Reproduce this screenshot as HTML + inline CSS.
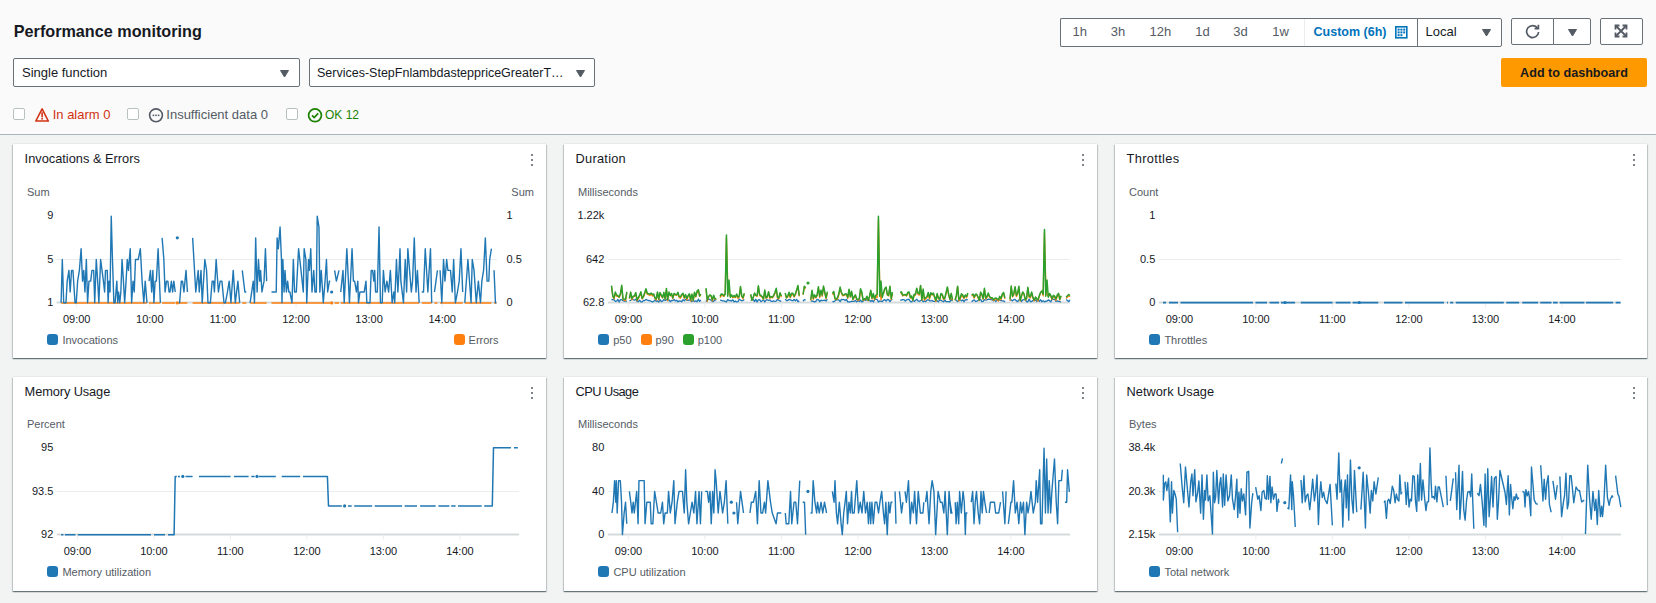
<!DOCTYPE html>
<html><head><meta charset="utf-8"><style>
html,body{margin:0;padding:0;}
body{width:1656px;height:603px;position:relative;overflow:hidden;background:#f2f3f3;font-family:"Liberation Sans", sans-serif;}
.t{position:absolute;line-height:1;white-space:nowrap;}
</style></head><body>
<div style="position:absolute;left:0;top:0;width:1656px;height:134px;background:#fafafa"></div>
<div style="position:absolute;left:0;top:134px;width:1656px;height:1px;background:#aab7b8"></div>
<div class="t" style="left:13.80px;top:22.99px;font-size:16.2px;color:#16191f;font-weight:bold;">Performance monitoring</div>
<div style="position:absolute;left:13px;top:58px;width:285px;height:27px;background:#fff;border:1px solid #687078;border-radius:2px"></div>
<div class="t" style="left:22.00px;top:66.30px;font-size:13px;color:#16191f;font-weight:normal;">Single function</div>
<svg style="position:absolute;left:280px;top:70px" width="9" height="7" viewBox="0 0 9 7"><path d="M0.5 0.5 L8.5 0.5 L4.5 7 Z" fill="#545b64" stroke="#545b64" stroke-width="1" stroke-linejoin="round"/></svg>
<div style="position:absolute;left:309px;top:58px;width:284px;height:27px;background:#fff;border:1px solid #687078;border-radius:2px"></div>
<div class="t" style="left:317.00px;top:66.72px;font-size:12.5px;color:#16191f;font-weight:normal;">Services-StepFnlambdasteppriceGreaterT…</div>
<svg style="position:absolute;left:576px;top:70px" width="9" height="7" viewBox="0 0 9 7"><path d="M0.5 0.5 L8.5 0.5 L4.5 7 Z" fill="#545b64" stroke="#545b64" stroke-width="1" stroke-linejoin="round"/></svg>
<div style="position:absolute;left:13px;top:108px;width:10px;height:10px;background:#fff;border:1px solid #b9c2c3;border-radius:2px"></div>
<div style="position:absolute;left:127px;top:108px;width:10px;height:10px;background:#fff;border:1px solid #b9c2c3;border-radius:2px"></div>
<div style="position:absolute;left:286px;top:108px;width:10px;height:10px;background:#fff;border:1px solid #b9c2c3;border-radius:2px"></div>
<svg style="position:absolute;left:34px;top:107px" width="16" height="16" viewBox="0 0 16 16"><path d="M8.1 1.9 L14.3 14 L1.8 14 Z" fill="none" stroke="#d13212" stroke-width="1.6" stroke-linejoin="round"/><rect x="7.3" y="5.3" width="1.6" height="5" fill="#d13212"/><rect x="7.3" y="11" width="1.6" height="1.6" fill="#d13212"/></svg>
<div class="t" style="left:52.70px;top:107.70px;font-size:13px;color:#d13212;font-weight:normal;">In alarm 0</div>
<svg style="position:absolute;left:148px;top:107px" width="16" height="16" viewBox="0 0 16 16"><circle cx="8" cy="8.3" r="6.4" fill="none" stroke="#545b64" stroke-width="1.6"/><rect x="4.6" y="7.6" width="1.6" height="1.5" fill="#545b64"/><rect x="7.2" y="7.6" width="1.6" height="1.5" fill="#545b64"/><rect x="9.8" y="7.6" width="1.6" height="1.5" fill="#545b64"/></svg>
<div class="t" style="left:166.30px;top:107.70px;font-size:13px;color:#545b64;font-weight:normal;">Insufficient data 0</div>
<svg style="position:absolute;left:307px;top:107px" width="16" height="16" viewBox="0 0 16 16"><circle cx="8" cy="8.3" r="6.4" fill="none" stroke="#1d8102" stroke-width="1.7"/><path d="M5 8.4 L7.2 10.6 L11.2 6.4" fill="none" stroke="#1d8102" stroke-width="1.7"/></svg>
<div class="t" style="left:325.00px;top:108.64px;font-size:12px;color:#1d8102;font-weight:normal;">OK 12</div>
<div style="position:absolute;left:1060px;top:18px;width:357px;height:27px;background:#fff;border:1px solid #687078;border-right:none;border-radius:2px 0 0 2px"></div>
<div class="t" style="left:929.80px;width:300px;text-align:center;top:24.80px;font-size:13px;color:#545b64;font-weight:normal;">1h</div>
<div class="t" style="left:967.90px;width:300px;text-align:center;top:24.80px;font-size:13px;color:#545b64;font-weight:normal;">3h</div>
<div class="t" style="left:1010.40px;width:300px;text-align:center;top:24.80px;font-size:13px;color:#545b64;font-weight:normal;">12h</div>
<div class="t" style="left:1052.40px;width:300px;text-align:center;top:24.80px;font-size:13px;color:#545b64;font-weight:normal;">1d</div>
<div class="t" style="left:1090.50px;width:300px;text-align:center;top:24.80px;font-size:13px;color:#545b64;font-weight:normal;">3d</div>
<div class="t" style="left:1130.50px;width:300px;text-align:center;top:24.80px;font-size:13px;color:#545b64;font-weight:normal;">1w</div>
<div style="position:absolute;left:1304px;top:19px;width:1px;height:27px;background:#eaeded"></div>
<div class="t" style="left:1313.60px;top:26.02px;font-size:12.5px;color:#0073bb;font-weight:bold;">Custom (6h)</div>
<svg style="position:absolute;left:1395px;top:26px" width="13" height="13" viewBox="0 0 13 13"><rect x="0.8" y="0.8" width="11" height="11" fill="none" stroke="#0073bb" stroke-width="1.6"/><g fill="#0073bb"><rect x="2.6" y="2.6" width="2" height="2"/><rect x="5.4" y="2.6" width="2" height="2"/><rect x="8.2" y="2.6" width="2" height="2"/><rect x="2.6" y="5.4" width="2" height="2"/><rect x="5.4" y="5.4" width="2" height="2"/><rect x="8.2" y="5.4" width="2" height="2"/><rect x="2.6" y="8.2" width="2" height="2"/><rect x="5.4" y="8.2" width="2" height="2"/></g></svg>
<div style="position:absolute;left:1417px;top:18px;width:83px;height:27px;background:#fff;border:1px solid #687078;border-radius:0 2px 2px 0"></div>
<div class="t" style="left:1425.60px;top:25.00px;font-size:13px;color:#16191f;font-weight:normal;">Local</div>
<svg style="position:absolute;left:1482px;top:29px" width="9" height="7" viewBox="0 0 9 7"><path d="M0.5 0.5 L8.5 0.5 L4.5 7 Z" fill="#545b64" stroke="#545b64" stroke-width="1" stroke-linejoin="round"/></svg>
<div style="position:absolute;left:1511px;top:18px;width:41px;height:25px;background:#fff;border:1px solid #687078;border-radius:2px 0 0 2px"></div>
<div style="position:absolute;left:1553px;top:18px;width:36px;height:25px;background:#fff;border:1px solid #687078;border-radius:0 2px 2px 0"></div>
<svg style="position:absolute;left:1524.5px;top:24px" width="16" height="15" viewBox="0 0 16 15"><path d="M12.6 4.2 A6 6 0 1 0 13.6 8" fill="none" stroke="#545b64" stroke-width="1.7"/><path d="M9.6 4.6 L13.4 4.6 L13.4 0.8" fill="none" stroke="#545b64" stroke-width="1.7"/></svg>
<svg style="position:absolute;left:1568px;top:29px" width="9" height="7" viewBox="0 0 9 7"><path d="M0.5 0.5 L8.5 0.5 L4.5 7 Z" fill="#545b64" stroke="#545b64" stroke-width="1" stroke-linejoin="round"/></svg>
<div style="position:absolute;left:1600px;top:18px;width:41px;height:25px;background:#fff;border:1px solid #687078;border-radius:2px"></div>
<svg style="position:absolute;left:1614px;top:24px" width="14" height="14" viewBox="0 0 14 14"><g fill="none" stroke="#545b64" stroke-width="1.8"><path d="M1.5 5.5 V1.5 H5.5"/><path d="M8.5 1.5 H12.5 V5.5"/><path d="M12.5 8.5 V12.5 H8.5"/><path d="M5.5 12.5 H1.5 V8.5"/><path d="M2 2 L12 12 M12 2 L2 12"/></g></svg>
<div style="position:absolute;left:1501px;top:58px;width:146px;height:29px;background:#ff9900;border-radius:2px"></div>
<div class="t" style="left:1520.10px;top:66.83px;font-size:12.6px;color:#16191f;font-weight:bold;">Add to dashboard</div>
<div style="position:absolute;left:13px;top:144px;width:533px;height:214px;background:#fff;box-shadow:0 1px 1px 0 rgba(0,28,36,.42),1px 1px 1px 0 rgba(0,28,36,.15),-1px 1px 1px 0 rgba(0,28,36,.15),0 -1px 0 0 rgba(0,28,36,.04);"></div>
<div style="position:absolute;left:564px;top:144px;width:533px;height:214px;background:#fff;box-shadow:0 1px 1px 0 rgba(0,28,36,.42),1px 1px 1px 0 rgba(0,28,36,.15),-1px 1px 1px 0 rgba(0,28,36,.15),0 -1px 0 0 rgba(0,28,36,.04);"></div>
<div style="position:absolute;left:1115px;top:144px;width:532px;height:214px;background:#fff;box-shadow:0 1px 1px 0 rgba(0,28,36,.42),1px 1px 1px 0 rgba(0,28,36,.15),-1px 1px 1px 0 rgba(0,28,36,.15),0 -1px 0 0 rgba(0,28,36,.04);"></div>
<div style="position:absolute;left:13px;top:377px;width:533px;height:214px;background:#fff;box-shadow:0 1px 1px 0 rgba(0,28,36,.42),1px 1px 1px 0 rgba(0,28,36,.15),-1px 1px 1px 0 rgba(0,28,36,.15),0 -1px 0 0 rgba(0,28,36,.04);"></div>
<div style="position:absolute;left:564px;top:377px;width:533px;height:214px;background:#fff;box-shadow:0 1px 1px 0 rgba(0,28,36,.42),1px 1px 1px 0 rgba(0,28,36,.15),-1px 1px 1px 0 rgba(0,28,36,.15),0 -1px 0 0 rgba(0,28,36,.04);"></div>
<div style="position:absolute;left:1115px;top:377px;width:532px;height:214px;background:#fff;box-shadow:0 1px 1px 0 rgba(0,28,36,.42),1px 1px 1px 0 rgba(0,28,36,.15),-1px 1px 1px 0 rgba(0,28,36,.15),0 -1px 0 0 rgba(0,28,36,.04);"></div>
<div class="t" style="left:24.60px;top:152.66px;font-size:12.8px;color:#16191f;font-weight:normal;letter-spacing:0px;">Invocations &amp; Errors</div>
<div style="position:absolute;left:530.7px;top:153.8px;width:2.6px;height:2.6px;border-radius:50%;background:#545b64"></div>
<div style="position:absolute;left:530.7px;top:158.8px;width:2.6px;height:2.6px;border-radius:50%;background:#545b64"></div>
<div style="position:absolute;left:530.7px;top:163.8px;width:2.6px;height:2.6px;border-radius:50%;background:#545b64"></div>
<div class="t" style="left:27.00px;top:186.99px;font-size:11px;color:#545b64;font-weight:normal;">Sum</div>
<div class="t" style="left:511.30px;top:186.99px;font-size:11px;color:#545b64;font-weight:normal;">Sum</div>
<div class="t" style="left:-246.70px;width:300px;text-align:right;top:209.79px;font-size:11px;color:#16191f;font-weight:normal;">9</div>
<div class="t" style="left:-246.70px;width:300px;text-align:right;top:254.09px;font-size:11px;color:#16191f;font-weight:normal;">5</div>
<div class="t" style="left:-246.70px;width:300px;text-align:right;top:297.09px;font-size:11px;color:#16191f;font-weight:normal;">1</div>
<div class="t" style="left:506.50px;top:209.79px;font-size:11px;color:#16191f;font-weight:normal;">1</div>
<div class="t" style="left:506.50px;top:254.09px;font-size:11px;color:#16191f;font-weight:normal;">0.5</div>
<div class="t" style="left:506.50px;top:297.09px;font-size:11px;color:#16191f;font-weight:normal;">0</div>
<svg style="position:absolute;left:0;top:0" width="1656" height="603"><line x1="56.5" y1="259.5" x2="497" y2="259.5" stroke="#eaeded" stroke-width="1"/><line x1="56.5" y1="302.5" x2="497" y2="302.5" stroke="#d5dbdb" stroke-width="2"/><line x1="76.7" y1="302.5" x2="76.7" y2="307.5" stroke="#eaeded" stroke-width="1"/><line x1="149.8" y1="302.5" x2="149.8" y2="307.5" stroke="#eaeded" stroke-width="1"/><line x1="222.9" y1="302.5" x2="222.9" y2="307.5" stroke="#eaeded" stroke-width="1"/><line x1="296.0" y1="302.5" x2="296.0" y2="307.5" stroke="#eaeded" stroke-width="1"/><line x1="369.1" y1="302.5" x2="369.1" y2="307.5" stroke="#eaeded" stroke-width="1"/><line x1="442.2" y1="302.5" x2="442.2" y2="307.5" stroke="#eaeded" stroke-width="1"/><path d="M61.10 302.90 L146.95 302.90 M149.04 302.90 L160.36 302.90 M162.11 302.90 L175.22 302.90 M178.71 302.90 L187.42 302.90 M192.64 302.90 L239.66 302.90 M242.27 302.90 L246.28 302.90 M250.11 302.90 L266.66 302.90 M271.53 302.90 L330.28 302.90 M334.63 302.90 L338.99 302.90 M340.73 302.90 L419.16 302.90 M421.77 302.90 L431.70 302.90 M434.48 302.90 L437.44 302.90 M440.06 302.90 L462.70 302.90 M464.79 302.90 L491.43 302.90 M494.04 302.90 L496.30 302.90" fill="none" stroke="#ff7f0e" stroke-width="1.5" stroke-linejoin="round"/><circle cx="177.31" cy="302.90" r="1.6" fill="#ff7f0e"/><circle cx="331.67" cy="302.90" r="1.6" fill="#ff7f0e"/><path d="M61.10 302.80 L62.31 259.50 L63.71 302.80 L64.93 302.80 L65.97 302.80 L67.19 281.15 L68.93 270.33 L70.15 291.98 L71.54 270.33 L72.94 270.33 L75.03 302.80 L76.25 302.80 L77.64 281.15 L79.38 270.33 L81.12 248.68 L82.52 281.15 L83.74 270.33 L84.95 291.98 L86.35 259.50 L87.57 302.80 L88.96 281.15 L90.70 281.15 L91.92 270.33 L93.66 270.33 L94.71 302.80 L96.27 259.50 L97.67 281.15 L98.89 302.80 L100.63 259.50 L102.02 270.33 L103.42 281.15 L104.63 291.98 L105.51 270.33 L107.25 270.33 L108.12 302.80 L108.99 281.15 L110.03 291.98 L111.25 216.20 L112.47 259.50 L113.86 302.80 L115.08 302.80 L116.83 281.15 L117.70 302.80 L118.57 291.98 L119.79 302.80 L120.83 291.98 L122.05 259.50 L123.44 281.15 L124.66 302.80 L126.06 281.15 L127.27 259.50 L128.49 270.33 L130.24 248.68 L131.63 302.80 L133.02 281.15 L134.24 291.98 L135.46 259.50 L136.85 259.50 L138.25 259.50 L140.34 248.68 L142.08 281.15 L143.82 302.80 L145.21 281.15 L146.95 302.80 M149.04 281.15 L150.44 270.33 L151.66 291.98 L152.88 270.33 L153.92 302.80 L155.14 281.15 L156.36 281.15 L158.10 248.68 L160.36 302.80 M162.11 237.85 L163.85 259.50 L165.07 291.98 L166.46 281.15 L167.85 281.15 L169.07 291.98 L170.00 291.98 L171.39 281.15 L172.61 291.98 L173.83 281.15 L175.22 291.98 M178.71 302.80 L179.58 302.80 L181.32 281.15 L182.54 281.15 L183.93 291.98 L186.02 270.33 L187.42 291.98 M192.64 237.85 L195.77 291.98 L196.99 281.15 L198.21 270.33 L199.26 291.98 L201.00 270.33 L202.22 302.80 L204.83 259.50 L206.57 270.33 L207.97 302.80 L210.40 302.80 L212.15 281.15 L213.54 281.15 L214.41 291.98 L216.15 259.50 L218.42 291.98 L220.16 281.15 L221.90 281.15 L223.99 302.80 L225.38 302.80 L227.47 291.98 L229.21 281.15 L230.95 302.80 L233.22 270.33 L235.31 302.80 L237.92 281.15 L239.66 302.80 M242.27 270.33 L244.89 291.98 L246.28 291.98 M250.11 302.80 L253.25 281.15 L254.47 302.80 L255.68 237.85 L257.08 291.98 L258.47 259.50 L259.69 281.15 L260.56 270.33 L261.95 291.98 L264.04 281.15 L265.44 248.68 L266.66 281.15 M271.53 291.98 L274.49 291.98 L276.23 291.98 L277.11 237.85 L278.32 248.68 L280.07 227.03 L281.46 259.50 L281.98 302.80 L282.85 259.50 L284.07 291.98 L285.00 270.33 L286.39 291.98 L287.61 281.15 L288.83 291.98 L289.88 291.98 L291.97 302.80 L293.36 259.50 L294.58 291.98 L296.32 291.98 L298.58 248.68 L301.02 270.33 L303.29 291.98 L304.16 248.68 L305.90 259.50 L306.77 302.80 L308.51 259.50 L309.38 270.33 L310.77 248.68 L311.99 291.98 L313.74 270.33 L314.95 291.98 L316.35 291.98 L317.22 216.20 L318.96 227.03 L319.83 291.98 L321.22 270.33 L323.31 302.80 L325.06 281.15 L326.45 259.50 L327.67 291.98 L329.41 281.15 L330.28 281.15 M334.63 270.33 L336.38 281.15 L338.99 270.33 M340.73 291.98 L342.99 270.33 L344.21 302.80 L346.83 248.68 L349.44 302.80 L352.05 248.68 L353.44 281.15 L354.66 281.15 L356.40 291.98 L357.80 281.15 L358.49 302.80 L359.89 291.98 L362.50 291.98 L364.24 291.98 L365.98 281.15 L366.85 302.80 L369.99 302.80 L371.21 270.33 L372.60 270.33 L373.82 281.15 L374.69 270.33 L375.56 291.98 L377.30 291.98 L379.04 227.03 L380.44 302.80 L382.18 302.80 L383.40 270.33 L385.14 291.98 L386.88 281.15 L388.62 291.98 L390.36 270.33 L392.11 302.80 L393.85 291.98 L394.72 302.80 L396.46 259.50 L397.85 291.98 L399.07 270.33 L400.00 248.68 L400.87 281.15 L403.48 302.80 L405.22 259.50 L406.62 291.98 L407.84 248.68 L409.58 270.33 L411.32 291.98 L412.54 281.15 L414.28 237.85 L416.02 291.98 L417.42 270.33 L419.16 302.80 M421.77 291.98 L423.51 291.98 L425.25 248.68 L427.86 291.98 L430.48 248.68 L431.70 302.80 M434.48 291.98 L437.44 270.33 M440.06 270.33 L441.80 302.80 L443.54 259.50 L444.93 281.15 L446.67 259.50 L447.89 270.33 L450.51 270.33 L452.25 291.98 L453.64 259.50 L455.38 302.80 L457.47 291.98 L459.21 281.15 L460.95 248.68 L462.70 291.98 M464.79 302.80 L467.92 259.50 L471.06 302.80 L472.27 259.50 L474.02 270.33 L476.28 302.80 L478.37 281.15 L480.46 302.80 L481.85 281.15 L483.59 270.33 L485.34 237.85 L487.08 281.15 L488.82 281.15 L489.69 259.50 L491.43 248.68 M494.04 270.33 L495.44 302.80 L496.31 302.80" fill="none" stroke="#1f77b4" stroke-width="1.4" stroke-linejoin="round"/><circle cx="177.31" cy="237.85" r="1.6" fill="#1f77b4"/><circle cx="331.67" cy="291.98" r="1.6" fill="#1f77b4"/></svg>
<div class="t" style="left:-73.30px;width:300px;text-align:center;top:313.99px;font-size:11px;color:#16191f;font-weight:normal;">09:00</div>
<div class="t" style="left:-0.20px;width:300px;text-align:center;top:313.99px;font-size:11px;color:#16191f;font-weight:normal;">10:00</div>
<div class="t" style="left:72.90px;width:300px;text-align:center;top:313.99px;font-size:11px;color:#16191f;font-weight:normal;">11:00</div>
<div class="t" style="left:146.00px;width:300px;text-align:center;top:313.99px;font-size:11px;color:#16191f;font-weight:normal;">12:00</div>
<div class="t" style="left:219.10px;width:300px;text-align:center;top:313.99px;font-size:11px;color:#16191f;font-weight:normal;">13:00</div>
<div class="t" style="left:292.20px;width:300px;text-align:center;top:313.99px;font-size:11px;color:#16191f;font-weight:normal;">14:00</div>
<div style="position:absolute;left:47.4px;top:334.3px;width:11px;height:11px;border-radius:3px;background:#1f77b4"></div>
<div class="t" style="left:62.40px;top:335.49px;font-size:11px;color:#545b64;font-weight:normal;">Invocations</div>
<div style="position:absolute;left:453.6px;top:334.3px;width:11px;height:11px;border-radius:3px;background:#ff7f0e"></div>
<div class="t" style="left:468.60px;top:335.49px;font-size:11px;color:#545b64;font-weight:normal;">Errors</div>
<div class="t" style="left:575.60px;top:152.66px;font-size:12.8px;color:#16191f;font-weight:normal;letter-spacing:0.25px;">Duration</div>
<div style="position:absolute;left:1081.7px;top:153.8px;width:2.6px;height:2.6px;border-radius:50%;background:#545b64"></div>
<div style="position:absolute;left:1081.7px;top:158.8px;width:2.6px;height:2.6px;border-radius:50%;background:#545b64"></div>
<div style="position:absolute;left:1081.7px;top:163.8px;width:2.6px;height:2.6px;border-radius:50%;background:#545b64"></div>
<div class="t" style="left:578.00px;top:186.99px;font-size:11px;color:#545b64;font-weight:normal;">Milliseconds</div>
<div class="t" style="left:304.30px;width:300px;text-align:right;top:209.79px;font-size:11px;color:#16191f;font-weight:normal;">1.22k</div>
<div class="t" style="left:304.30px;width:300px;text-align:right;top:254.09px;font-size:11px;color:#16191f;font-weight:normal;">642</div>
<div class="t" style="left:304.30px;width:300px;text-align:right;top:297.09px;font-size:11px;color:#16191f;font-weight:normal;">62.8</div>
<svg style="position:absolute;left:0;top:0" width="1656" height="603"><line x1="607.8" y1="259.5" x2="1070" y2="259.5" stroke="#eaeded" stroke-width="1"/><line x1="607.8" y1="302.5" x2="1070" y2="302.5" stroke="#d5dbdb" stroke-width="2"/><line x1="628.4" y1="302.5" x2="628.4" y2="307.5" stroke="#eaeded" stroke-width="1"/><line x1="704.9" y1="302.5" x2="704.9" y2="307.5" stroke="#eaeded" stroke-width="1"/><line x1="781.4" y1="302.5" x2="781.4" y2="307.5" stroke="#eaeded" stroke-width="1"/><line x1="857.9" y1="302.5" x2="857.9" y2="307.5" stroke="#eaeded" stroke-width="1"/><line x1="934.4" y1="302.5" x2="934.4" y2="307.5" stroke="#eaeded" stroke-width="1"/><line x1="1010.9" y1="302.5" x2="1010.9" y2="307.5" stroke="#eaeded" stroke-width="1"/><path d="M611.50 300.19 L612.78 299.40 L614.05 299.75 L615.33 301.35 L616.61 301.13 L617.89 299.47 L619.16 301.98 L620.44 299.62 L621.72 299.69 L622.99 300.64 L624.27 301.12 L625.55 301.19 L626.83 301.26 M629.38 300.54 L630.66 300.39 L631.93 299.11 L633.21 299.70 L634.49 300.20 L635.77 299.13 L637.04 301.38 L638.32 301.54 L639.60 300.22 L640.87 301.87 L642.15 301.90 L643.43 300.51 L644.71 300.65 L645.98 299.34 L647.26 300.18 L648.54 300.51 L649.81 300.56 L651.09 301.28 L652.37 301.97 L653.65 301.44 L654.92 299.99 L656.20 301.42 L657.48 300.93 L658.75 301.99 L660.03 299.59 L661.31 301.55 L662.59 301.22 L663.86 299.45 L665.14 300.52 L666.42 299.54 L667.69 300.14 L668.97 299.85 L670.25 301.73 L671.53 300.43 L672.80 300.53 L674.08 299.47 L675.36 300.95 L676.64 300.27 L677.91 301.83 L679.19 300.88 L680.47 301.06 L681.74 301.56 L683.02 299.63 L684.30 300.90 L685.58 299.16 L686.85 300.29 L688.13 300.25 L689.41 300.15 L690.68 300.04 L691.96 301.56 L693.24 300.72 L694.52 301.31 L695.79 300.83 L697.07 301.72 L698.35 299.19 L699.62 301.38 L700.90 300.05 M706.01 301.62 L707.29 299.55 L708.56 299.26 L709.84 299.38 L711.12 300.35 L712.40 301.58 L713.67 301.44 L714.95 299.31 L716.23 300.40 M720.06 300.14 L721.34 300.35 L722.61 300.91 L723.89 300.81 L725.17 301.31 L726.44 301.89 L727.72 299.46 L729.00 300.64 L730.28 300.41 L731.55 301.07 L732.83 299.82 L734.11 301.93 L735.38 300.92 L736.66 301.91 L737.94 301.64 L739.22 299.20 L740.49 300.09 L741.77 300.76 L743.05 300.48 L744.32 299.47 M750.71 300.49 L751.99 299.78 L753.26 299.36 L754.54 301.56 L755.82 299.29 L757.10 301.98 L758.37 299.82 L759.65 299.65 L760.93 301.60 L762.20 300.79 L763.48 299.64 L764.76 301.96 L766.04 300.18 L767.31 299.70 L768.59 300.51 L769.87 299.90 L771.14 301.34 L772.42 301.42 L773.70 300.95 L774.98 301.48 L776.25 301.00 L777.53 299.25 L778.81 300.34 L780.08 301.01 L781.36 301.21 M785.19 299.16 L786.47 300.50 L787.75 300.49 L789.03 299.40 L790.30 299.85 L791.58 300.32 L792.86 300.76 L794.13 299.45 L795.41 300.81 L796.69 299.32 L797.97 301.80 L799.24 300.75 M803.07 301.27 L804.35 299.66 L805.63 300.04 M810.74 301.04 L812.01 300.85 L813.29 301.41 L814.57 301.85 L815.85 301.38 L817.12 299.35 L818.40 299.56 L819.68 301.67 L820.95 300.25 L822.23 300.61 L823.51 300.28 L824.79 300.09 L826.06 301.11 L827.34 299.21 M832.45 301.47 L833.73 301.82 L835.00 300.81 L836.28 299.78 L837.56 299.64 L838.83 299.88 L840.11 301.67 L841.39 299.35 L842.67 299.67 L843.94 299.45 L845.22 300.48 L846.50 299.34 L847.77 301.86 L849.05 301.91 L850.33 301.94 L851.61 301.27 L852.88 301.28 L854.16 301.46 L855.44 300.36 L856.71 301.89 L857.99 300.29 L859.27 301.52 L860.55 300.03 L861.82 301.94 L863.10 301.10 L864.38 299.28 L865.65 300.44 L866.93 299.65 L868.21 300.09 L869.49 300.23 L870.76 301.45 L872.04 300.33 L873.32 301.88 L874.59 299.68 L875.87 299.22 L877.15 299.52 L878.43 301.85 L879.70 301.02 L880.98 301.08 L882.26 301.67 L883.53 300.18 L884.81 299.69 L886.09 301.09 L887.37 299.50 L888.64 299.69 L889.92 301.63 L891.20 299.78 L892.47 299.44 M900.14 300.08 L901.42 300.17 L902.69 299.61 L903.97 299.67 L905.25 301.05 L906.52 299.91 L907.80 299.48 L909.08 299.41 L910.36 301.53 L911.63 301.92 L912.91 300.11 L914.19 301.38 L915.46 300.37 L916.74 299.26 L918.02 300.90 L919.30 301.27 L920.57 300.68 L921.85 300.09 L923.13 301.71 L924.40 300.90 L925.68 301.61 L926.96 300.08 L928.24 299.59 L929.51 300.91 L930.79 300.92 L932.07 300.44 L933.34 301.38 L934.62 301.28 L935.90 301.04 L937.18 300.67 L938.45 301.76 L939.73 299.82 L941.01 300.32 L942.28 301.13 L943.56 301.78 L944.84 299.79 L946.12 301.62 L947.39 301.61 L948.67 301.62 L949.95 301.76 L951.22 299.37 L952.50 301.22 M955.06 299.58 L956.33 300.20 L957.61 301.46 L958.89 300.74 L960.16 299.44 L961.44 300.91 L962.72 299.94 L964.00 301.72 L965.27 299.89 L966.55 299.75 L967.83 299.61 M971.66 301.81 L972.94 300.50 L974.21 299.80 L975.49 301.45 L976.77 301.23 L978.04 300.45 L979.32 299.83 L980.60 299.40 L981.88 301.64 L983.15 301.47 L984.43 299.68 L985.71 300.13 L986.98 299.91 L988.26 299.11 L989.54 299.28 L990.82 299.56 L992.09 299.75 L993.37 300.85 L994.65 300.14 L995.92 301.47 L997.20 299.80 L998.48 299.80 L999.76 299.91 L1001.03 300.71 L1002.31 300.90 L1003.59 300.78 L1004.86 301.90 M1009.97 300.41 L1011.25 299.91 L1012.53 300.89 L1013.81 299.59 L1015.08 299.33 L1016.36 300.88 L1017.64 301.60 L1018.91 299.79 L1020.19 299.12 L1021.47 301.57 L1022.75 299.93 L1024.02 299.61 L1025.30 299.33 L1026.58 301.64 L1027.85 301.73 L1029.13 299.14 L1030.41 301.66 L1031.69 301.49 L1032.96 300.33 L1034.24 300.71 L1035.52 299.82 L1036.79 301.45 L1038.07 299.35 L1039.35 301.37 L1040.63 299.77 L1041.90 301.80 L1043.18 300.63 L1044.46 301.91 L1045.73 301.09 L1047.01 301.09 L1048.29 299.91 L1049.57 300.68 L1050.84 301.84 L1052.12 299.11 L1053.40 299.42 L1054.67 299.34 L1055.95 301.28 L1057.23 300.86 L1058.51 301.34 L1059.78 301.64 L1061.06 301.90 M1066.17 299.50 L1067.45 300.60 L1068.72 301.47 L1070.00 300.06" fill="none" stroke="#1f77b4" stroke-width="1.3" stroke-linejoin="round"/><path d="M611.50 286.28 L612.78 296.51 L614.05 298.90 L615.33 293.14 L616.61 296.38 L617.89 296.06 L619.16 297.47 L620.44 294.31 L621.72 286.62 L622.99 299.74 L624.27 300.06 L625.55 300.55 L626.83 293.06 M629.38 298.74 L630.66 292.91 L631.93 299.89 L633.21 297.01 L634.49 296.44 L635.77 293.35 L637.04 300.72 L638.32 298.62 L639.60 296.20 L640.87 293.22 L642.15 299.00 L643.43 297.14 L644.71 293.85 L645.98 290.18 L647.26 294.40 L648.54 294.70 L649.81 295.56 L651.09 293.96 L652.37 295.96 L653.65 294.69 L654.92 298.19 L656.20 300.17 L657.48 292.61 L658.75 300.21 L660.03 293.52 L661.31 296.14 L662.59 297.90 L663.86 293.58 L665.14 299.36 L666.42 289.92 L667.69 300.87 L668.97 292.76 L670.25 295.86 L671.53 294.83 L672.80 298.78 L674.08 293.93 L675.36 295.22 L676.64 295.42 L677.91 293.01 L679.19 297.68 L680.47 298.17 L681.74 295.68 L683.02 293.70 L684.30 298.32 L685.58 295.50 L686.85 300.01 L688.13 296.01 L689.41 294.67 L690.68 301.14 L691.96 294.89 L693.24 300.78 L694.52 293.12 L695.79 297.00 L697.07 292.41 L698.35 290.13 L699.62 296.40 L700.90 294.49 M706.01 289.46 L707.29 301.39 L708.56 297.06 L709.84 295.24 L711.12 296.38 L712.40 301.12 L713.67 296.47 L714.95 298.78 L716.23 299.78 M720.06 297.60 L721.34 295.26 L722.61 295.60 L723.89 296.33 L725.17 293.86 L726.44 238.00 L727.72 282.00 L729.00 294.10 L730.28 296.03 L731.55 295.82 L732.83 297.77 L734.11 296.99 L735.38 297.57 L736.66 295.47 L737.94 298.46 L739.22 297.07 L740.49 287.24 L741.77 296.47 L743.05 298.83 L744.32 293.80 M750.71 295.42 L751.99 300.36 L753.26 297.40 L754.54 293.89 L755.82 295.73 L757.10 296.46 L758.37 286.93 L759.65 295.63 L760.93 296.38 L762.20 297.08 L763.48 299.32 L764.76 291.37 L766.04 298.26 L767.31 297.58 L768.59 292.17 L769.87 298.73 L771.14 297.00 L772.42 297.93 L773.70 296.31 L774.98 293.41 L776.25 289.74 L777.53 298.28 L778.81 298.75 L780.08 293.17 L781.36 297.25 M785.19 294.16 L786.47 298.15 L787.75 296.95 L789.03 293.19 L790.30 297.77 L791.58 294.75 L792.86 294.39 L794.13 297.04 L795.41 294.93 L796.69 290.55 L797.97 286.37 L799.24 296.40 M803.07 294.89 L804.35 286.69 L805.63 288.56 M810.74 300.48 L812.01 291.29 L813.29 299.59 L814.57 295.56 L815.85 298.06 L817.12 295.72 L818.40 287.93 L819.68 297.70 L820.95 290.74 L822.23 296.39 L823.51 287.14 L824.79 293.38 L826.06 298.90 L827.34 293.07 M832.45 294.65 L833.73 292.58 L835.00 299.18 L836.28 299.51 L837.56 298.82 L838.83 295.04 L840.11 288.15 L841.39 293.14 L842.67 295.81 L843.94 295.42 L845.22 294.87 L846.50 294.91 L847.77 298.42 L849.05 289.99 L850.33 297.15 L851.61 292.44 L852.88 299.95 L854.16 297.74 L855.44 295.60 L856.71 299.55 L857.99 300.08 L859.27 299.87 L860.55 290.11 L861.82 293.49 L863.10 300.45 L864.38 299.96 L865.65 299.51 L866.93 297.40 L868.21 300.93 L869.49 297.09 L870.76 291.11 L872.04 298.94 L873.32 294.70 L874.59 299.80 L875.87 296.17 L877.15 297.61 L878.43 219.30 L879.70 283.00 L880.98 299.96 L882.26 293.30 L883.53 293.68 L884.81 288.78 L886.09 287.99 L887.37 295.23 L888.64 295.96 L889.92 286.69 L891.20 299.57 L892.47 293.57 M900.14 292.97 L901.42 292.62 L902.69 295.99 L903.97 295.08 L905.25 295.22 L906.52 296.08 L907.80 293.36 L909.08 293.37 L910.36 298.18 L911.63 297.19 L912.91 300.61 L914.19 295.14 L915.46 295.22 L916.74 288.80 L918.02 294.35 L919.30 295.07 L920.57 285.88 L921.85 300.29 L923.13 290.36 L924.40 300.22 L925.68 298.75 L926.96 297.84 L928.24 293.89 L929.51 299.12 L930.79 293.74 L932.07 295.08 L933.34 293.79 L934.62 297.92 L935.90 301.68 L937.18 294.27 L938.45 298.99 L939.73 299.42 L941.01 294.64 L942.28 295.30 L943.56 299.75 L944.84 298.61 L946.12 293.41 L947.39 288.02 L948.67 295.19 L949.95 299.73 L951.22 294.16 L952.50 300.49 M955.06 300.41 L956.33 296.48 L957.61 286.77 L958.89 300.84 L960.16 299.25 L961.44 295.23 L962.72 296.44 L964.00 298.72 L965.27 295.48 L966.55 297.72 L967.83 294.14 M971.66 296.19 L972.94 294.66 L974.21 298.19 L975.49 295.06 L976.77 295.07 L978.04 297.70 L979.32 300.56 L980.60 293.01 L981.88 294.98 L983.15 299.37 L984.43 289.55 L985.71 299.05 L986.98 297.43 L988.26 294.47 L989.54 297.05 L990.82 298.76 L992.09 298.11 L993.37 300.42 L994.65 299.87 L995.92 298.40 L997.20 300.04 L998.48 301.10 L999.76 297.25 L1001.03 299.73 L1002.31 294.85 L1003.59 293.18 L1004.86 298.89 M1009.97 300.72 L1011.25 286.78 L1012.53 296.84 L1013.81 294.89 L1015.08 287.26 L1016.36 296.70 L1017.64 294.27 L1018.91 287.29 L1020.19 301.06 L1021.47 296.40 L1022.75 292.33 L1024.02 294.26 L1025.30 300.40 L1026.58 298.84 L1027.85 288.70 L1029.13 297.25 L1030.41 297.94 L1031.69 293.23 L1032.96 298.06 L1034.24 300.91 L1035.52 297.46 L1036.79 299.34 L1038.07 301.04 L1039.35 296.18 L1040.63 292.72 L1041.90 291.34 L1043.18 295.88 L1044.46 232.60 L1045.73 282.00 L1047.01 295.06 L1048.29 295.90 L1049.57 294.71 L1050.84 296.51 L1052.12 299.56 L1053.40 296.20 L1054.67 297.24 L1055.95 300.38 L1057.23 296.29 L1058.51 293.74 L1059.78 300.05 L1061.06 296.25 M1066.17 298.59 L1067.45 296.89 L1068.72 295.79 L1070.00 296.69" fill="none" stroke="#ff7f0e" stroke-width="1.3" stroke-linejoin="round"/><path d="M611.50 285.66 L612.78 295.82 L614.05 297.89 L615.33 292.09 L616.61 294.96 L617.89 295.74 L619.16 296.94 L620.44 293.58 L621.72 285.34 L622.99 298.78 L624.27 299.14 L625.55 299.34 L626.83 291.97 M629.38 298.34 L630.66 292.06 L631.93 298.53 L633.21 295.99 L634.49 296.07 L635.77 292.52 L637.04 299.96 L638.32 297.62 L639.60 295.20 L640.87 291.78 L642.15 298.29 L643.43 296.35 L644.71 292.81 L645.98 288.82 L647.26 293.25 L648.54 293.83 L649.81 294.28 L651.09 293.08 L652.37 294.51 L653.65 294.05 L654.92 297.74 L656.20 298.88 L657.48 291.95 L658.75 298.89 L660.03 292.48 L661.31 295.23 L662.59 297.50 L663.86 292.34 L665.14 298.98 L666.42 288.46 L667.69 299.52 L668.97 292.09 L670.25 295.41 L671.53 293.47 L672.80 297.90 L674.08 293.48 L675.36 294.33 L676.64 294.83 L677.91 292.22 L679.19 296.62 L680.47 296.77 L681.74 294.42 L683.02 293.20 L684.30 297.45 L685.58 294.61 L686.85 298.52 L688.13 295.61 L689.41 293.76 L690.68 299.74 L691.96 294.11 L693.24 300.17 L694.52 292.15 L695.79 296.32 L697.07 291.00 L698.35 289.72 L699.62 295.85 L700.90 294.09 M706.01 288.08 L707.29 299.96 L708.56 296.45 L709.84 294.94 L711.12 295.62 L712.40 299.67 L713.67 295.26 L714.95 298.41 L716.23 298.64 M720.06 296.44 L721.34 293.92 L722.61 294.29 L723.89 295.60 L725.17 294.30 L726.44 235.00 L727.72 296.30 L729.00 280.00 L730.28 297.30 L731.55 294.84 L732.83 296.85 L734.11 295.55 L735.38 296.93 L736.66 293.97 L737.94 297.07 L739.22 296.33 L740.49 286.54 L741.77 296.02 L743.05 297.43 L744.32 293.27 M750.71 294.24 L751.99 300.01 L753.26 296.99 L754.54 292.99 L755.82 295.37 L757.10 295.56 L758.37 285.74 L759.65 294.54 L760.93 295.34 L762.20 296.72 L763.48 298.74 L764.76 290.00 L766.04 297.81 L767.31 296.64 L768.59 291.81 L769.87 297.30 L771.14 296.50 L772.42 297.14 L773.70 295.36 L774.98 292.24 L776.25 288.31 L777.53 297.09 L778.81 298.03 L780.08 292.78 L781.36 296.10 M785.19 292.93 L786.47 297.64 L787.75 296.10 L789.03 292.26 L790.30 296.73 L791.58 293.26 L792.86 293.27 L794.13 296.27 L795.41 293.77 L796.69 289.69 L797.97 285.58 L799.24 295.66 M803.07 294.29 L804.35 286.21 L805.63 287.73 M810.74 299.77 L812.01 290.24 L813.29 298.21 L814.57 294.83 L815.85 297.10 L817.12 294.88 L818.40 286.85 L819.68 296.25 L820.95 290.28 L822.23 294.94 L823.51 286.04 L824.79 292.12 L826.06 297.84 L827.34 291.72 M832.45 293.74 L833.73 291.47 L835.00 298.64 L836.28 299.14 L837.56 297.57 L838.83 293.77 L840.11 287.05 L841.39 292.45 L842.67 294.72 L843.94 295.02 L845.22 293.77 L846.50 293.92 L847.77 297.38 L849.05 289.16 L850.33 296.58 L851.61 291.27 L852.88 299.10 L854.16 296.55 L855.44 294.86 L856.71 299.15 L857.99 299.13 L859.27 298.82 L860.55 288.71 L861.82 292.13 L863.10 300.08 L864.38 298.74 L865.65 298.90 L866.93 296.27 L868.21 300.17 L869.49 296.41 L870.76 290.22 L872.04 298.01 L873.32 293.56 L874.59 298.74 L875.87 295.05 L877.15 294.30 L878.43 216.30 L879.70 296.30 L880.98 281.00 L882.26 297.30 L883.53 292.71 L884.81 288.45 L886.09 287.09 L887.37 294.66 L888.64 295.20 L889.92 286.30 L891.20 298.48 L892.47 292.20 M900.14 292.52 L901.42 291.89 L902.69 295.10 L903.97 294.64 L905.25 294.53 L906.52 295.45 L907.80 292.20 L909.08 291.89 L910.36 297.45 L911.63 295.94 L912.91 300.14 L914.19 294.14 L915.46 294.40 L916.74 288.15 L918.02 293.06 L919.30 293.88 L920.57 285.41 L921.85 299.64 L923.13 289.08 L924.40 298.73 L925.68 297.72 L926.96 296.50 L928.24 292.41 L929.51 297.93 L930.79 292.66 L932.07 294.52 L933.34 293.05 L934.62 296.87 L935.90 300.27 L937.18 293.61 L938.45 298.21 L939.73 299.09 L941.01 293.50 L942.28 294.47 L943.56 298.49 L944.84 298.03 L946.12 292.32 L947.39 286.91 L948.67 294.33 L949.95 299.20 L951.22 293.37 L952.50 299.30 M955.06 300.00 L956.33 295.62 L957.61 286.19 L958.89 299.58 L960.16 297.97 L961.44 293.80 L962.72 295.13 L964.00 297.64 L965.27 294.95 L966.55 296.43 L967.83 292.97 M971.66 294.90 L972.94 294.01 L974.21 297.08 L975.49 294.14 L976.77 294.36 L978.04 297.01 L979.32 300.08 L980.60 292.12 L981.88 294.23 L983.15 298.56 L984.43 288.23 L985.71 297.93 L986.98 296.31 L988.26 292.99 L989.54 296.49 L990.82 297.85 L992.09 297.70 L993.37 299.65 L994.65 298.43 L995.92 298.00 L997.20 298.83 L998.48 299.76 L999.76 296.34 L1001.03 298.48 L1002.31 294.02 L1003.59 292.46 L1004.86 297.98 M1009.97 299.24 L1011.25 286.08 L1012.53 296.27 L1013.81 293.46 L1015.08 286.79 L1016.36 295.24 L1017.64 292.94 L1018.91 286.22 L1020.19 300.25 L1021.47 295.87 L1022.75 291.90 L1024.02 293.84 L1025.30 299.68 L1026.58 298.05 L1027.85 287.29 L1029.13 296.31 L1030.41 296.45 L1031.69 292.07 L1032.96 297.58 L1034.24 299.95 L1035.52 296.97 L1036.79 299.00 L1038.07 299.60 L1039.35 295.47 L1040.63 292.19 L1041.90 290.92 L1043.18 294.30 L1044.46 229.60 L1045.73 296.30 L1047.01 280.00 L1048.29 297.30 L1049.57 293.48 L1050.84 295.62 L1052.12 298.62 L1053.40 295.35 L1054.67 296.13 L1055.95 298.89 L1057.23 295.04 L1058.51 293.36 L1059.78 299.15 L1061.06 295.67 M1066.17 297.14 L1067.45 295.70 L1068.72 294.46 L1070.00 295.55" fill="none" stroke="#2ca02c" stroke-width="1.5" stroke-linejoin="round"/><circle cx="808.00" cy="283.00" r="1.6" fill="#2ca02c"/></svg>
<div class="t" style="left:478.40px;width:300px;text-align:center;top:313.99px;font-size:11px;color:#16191f;font-weight:normal;">09:00</div>
<div class="t" style="left:554.90px;width:300px;text-align:center;top:313.99px;font-size:11px;color:#16191f;font-weight:normal;">10:00</div>
<div class="t" style="left:631.40px;width:300px;text-align:center;top:313.99px;font-size:11px;color:#16191f;font-weight:normal;">11:00</div>
<div class="t" style="left:707.90px;width:300px;text-align:center;top:313.99px;font-size:11px;color:#16191f;font-weight:normal;">12:00</div>
<div class="t" style="left:784.40px;width:300px;text-align:center;top:313.99px;font-size:11px;color:#16191f;font-weight:normal;">13:00</div>
<div class="t" style="left:860.90px;width:300px;text-align:center;top:313.99px;font-size:11px;color:#16191f;font-weight:normal;">14:00</div>
<div style="position:absolute;left:598.2px;top:334.3px;width:11px;height:11px;border-radius:3px;background:#1f77b4"></div>
<div class="t" style="left:613.20px;top:335.49px;font-size:11px;color:#545b64;font-weight:normal;">p50</div>
<div style="position:absolute;left:640.5px;top:334.3px;width:11px;height:11px;border-radius:3px;background:#ff7f0e"></div>
<div class="t" style="left:655.50px;top:335.49px;font-size:11px;color:#545b64;font-weight:normal;">p90</div>
<div style="position:absolute;left:682.7px;top:334.3px;width:11px;height:11px;border-radius:3px;background:#2ca02c"></div>
<div class="t" style="left:697.70px;top:335.49px;font-size:11px;color:#545b64;font-weight:normal;">p100</div>
<div class="t" style="left:1126.60px;top:152.66px;font-size:12.8px;color:#16191f;font-weight:normal;letter-spacing:0.35px;">Throttles</div>
<div style="position:absolute;left:1632.7px;top:153.8px;width:2.6px;height:2.6px;border-radius:50%;background:#545b64"></div>
<div style="position:absolute;left:1632.7px;top:158.8px;width:2.6px;height:2.6px;border-radius:50%;background:#545b64"></div>
<div style="position:absolute;left:1632.7px;top:163.8px;width:2.6px;height:2.6px;border-radius:50%;background:#545b64"></div>
<div class="t" style="left:1129.00px;top:186.99px;font-size:11px;color:#545b64;font-weight:normal;">Count</div>
<div class="t" style="left:855.30px;width:300px;text-align:right;top:209.79px;font-size:11px;color:#16191f;font-weight:normal;">1</div>
<div class="t" style="left:855.30px;width:300px;text-align:right;top:254.09px;font-size:11px;color:#16191f;font-weight:normal;">0.5</div>
<div class="t" style="left:855.30px;width:300px;text-align:right;top:297.09px;font-size:11px;color:#16191f;font-weight:normal;">0</div>
<svg style="position:absolute;left:0;top:0" width="1656" height="603"><line x1="1158.8" y1="259.5" x2="1621" y2="259.5" stroke="#eaeded" stroke-width="1"/><line x1="1158.8" y1="302.5" x2="1621" y2="302.5" stroke="#d5dbdb" stroke-width="2"/><line x1="1179.4" y1="302.5" x2="1179.4" y2="307.5" stroke="#eaeded" stroke-width="1"/><line x1="1255.9" y1="302.5" x2="1255.9" y2="307.5" stroke="#eaeded" stroke-width="1"/><line x1="1332.4" y1="302.5" x2="1332.4" y2="307.5" stroke="#eaeded" stroke-width="1"/><line x1="1408.9" y1="302.5" x2="1408.9" y2="307.5" stroke="#eaeded" stroke-width="1"/><line x1="1485.4" y1="302.5" x2="1485.4" y2="307.5" stroke="#eaeded" stroke-width="1"/><line x1="1561.9" y1="302.5" x2="1561.9" y2="307.5" stroke="#eaeded" stroke-width="1"/><path d="M1163.00 302.70 L1166.00 302.70 M1169.00 302.70 L1178.00 302.70 M1180.50 302.70 L1253.00 302.70 M1255.50 302.70 L1267.00 302.70 M1269.60 302.70 L1279.00 302.70 M1281.00 302.70 L1295.10 302.70 M1300.80 302.70 L1332.60 302.70 M1335.70 302.70 L1350.60 302.70 M1352.60 302.70 L1378.30 302.70 M1384.00 302.70 L1402.40 302.70 M1405.00 302.70 L1444.00 302.70 M1447.00 302.70 L1448.00 302.70 M1450.20 302.70 L1453.20 302.70 M1455.80 302.70 L1503.80 302.70 M1506.30 302.70 L1519.20 302.70 M1522.20 302.70 L1538.20 302.70 M1540.20 302.70 L1551.50 302.70 M1553.00 302.70 L1557.70 302.70 M1559.70 302.70 L1584.40 302.70 M1585.90 302.70 L1613.10 302.70 M1615.70 302.70 L1620.50 302.70" fill="none" stroke="#1f77b4" stroke-width="1.7" stroke-linejoin="round"/><circle cx="1285.00" cy="302.50" r="1.6" fill="#1f77b4"/><circle cx="1359.30" cy="302.50" r="1.6" fill="#1f77b4"/></svg>
<div class="t" style="left:1029.40px;width:300px;text-align:center;top:313.99px;font-size:11px;color:#16191f;font-weight:normal;">09:00</div>
<div class="t" style="left:1105.90px;width:300px;text-align:center;top:313.99px;font-size:11px;color:#16191f;font-weight:normal;">10:00</div>
<div class="t" style="left:1182.40px;width:300px;text-align:center;top:313.99px;font-size:11px;color:#16191f;font-weight:normal;">11:00</div>
<div class="t" style="left:1258.90px;width:300px;text-align:center;top:313.99px;font-size:11px;color:#16191f;font-weight:normal;">12:00</div>
<div class="t" style="left:1335.40px;width:300px;text-align:center;top:313.99px;font-size:11px;color:#16191f;font-weight:normal;">13:00</div>
<div class="t" style="left:1411.90px;width:300px;text-align:center;top:313.99px;font-size:11px;color:#16191f;font-weight:normal;">14:00</div>
<div style="position:absolute;left:1149.4px;top:334.3px;width:11px;height:11px;border-radius:3px;background:#1f77b4"></div>
<div class="t" style="left:1164.40px;top:335.49px;font-size:11px;color:#545b64;font-weight:normal;">Throttles</div>
<div class="t" style="left:24.60px;top:385.66px;font-size:12.8px;color:#16191f;font-weight:normal;letter-spacing:-0.1px;">Memory Usage</div>
<div style="position:absolute;left:530.7px;top:386.8px;width:2.6px;height:2.6px;border-radius:50%;background:#545b64"></div>
<div style="position:absolute;left:530.7px;top:391.8px;width:2.6px;height:2.6px;border-radius:50%;background:#545b64"></div>
<div style="position:absolute;left:530.7px;top:396.8px;width:2.6px;height:2.6px;border-radius:50%;background:#545b64"></div>
<div class="t" style="left:27.00px;top:418.99px;font-size:11px;color:#545b64;font-weight:normal;">Percent</div>
<div class="t" style="left:-246.70px;width:300px;text-align:right;top:441.79px;font-size:11px;color:#16191f;font-weight:normal;">95</div>
<div class="t" style="left:-246.70px;width:300px;text-align:right;top:486.09px;font-size:11px;color:#16191f;font-weight:normal;">93.5</div>
<div class="t" style="left:-246.70px;width:300px;text-align:right;top:529.09px;font-size:11px;color:#16191f;font-weight:normal;">92</div>
<svg style="position:absolute;left:0;top:0" width="1656" height="603"><line x1="56.8" y1="491.5" x2="519" y2="491.5" stroke="#eaeded" stroke-width="1"/><line x1="56.8" y1="534.5" x2="519" y2="534.5" stroke="#d5dbdb" stroke-width="2"/><line x1="77.4" y1="534.5" x2="77.4" y2="539.5" stroke="#eaeded" stroke-width="1"/><line x1="153.9" y1="534.5" x2="153.9" y2="539.5" stroke="#eaeded" stroke-width="1"/><line x1="230.4" y1="534.5" x2="230.4" y2="539.5" stroke="#eaeded" stroke-width="1"/><line x1="306.9" y1="534.5" x2="306.9" y2="539.5" stroke="#eaeded" stroke-width="1"/><line x1="383.4" y1="534.5" x2="383.4" y2="539.5" stroke="#eaeded" stroke-width="1"/><line x1="459.9" y1="534.5" x2="459.9" y2="539.5" stroke="#eaeded" stroke-width="1"/><path d="M61.10 534.80 L63.40 534.80 M64.90 534.80 L75.50 534.80 M77.70 534.80 L151.00 534.80 M154.00 534.80 L165.00 534.80 M168.00 534.80 L174.10 534.80 L175.20 476.40 L176.80 476.40 M178.00 476.40 L180.00 476.40 M185.50 476.40 L192.60 476.40 M199.00 476.40 L230.60 476.40 M233.90 476.40 L248.60 476.40 M251.30 476.40 L254.60 476.40 M259.00 476.40 L275.80 476.40 M281.70 476.40 L300.20 476.40 M303.00 476.40 L327.40 476.40 L328.50 505.90 L341.80 505.90 M348.00 505.90 L351.70 505.90 M354.20 505.90 L372.20 505.90 M374.70 505.90 L402.10 505.90 M404.60 505.90 L417.00 505.90 M420.10 505.90 L435.70 505.90 M438.40 505.90 L449.40 505.90 M451.20 505.90 L455.60 505.90 M458.00 505.90 L481.70 505.90 M484.20 505.90 L492.30 505.90 L493.50 447.70 L510.90 447.70 M514.00 447.70 L517.80 447.70" fill="none" stroke="#1f77b4" stroke-width="1.5" stroke-linejoin="round"/><circle cx="182.80" cy="476.40" r="1.6" fill="#1f77b4"/><circle cx="257.00" cy="476.40" r="1.6" fill="#1f77b4"/><circle cx="344.60" cy="505.90" r="1.6" fill="#1f77b4"/></svg>
<div class="t" style="left:-72.60px;width:300px;text-align:center;top:545.99px;font-size:11px;color:#16191f;font-weight:normal;">09:00</div>
<div class="t" style="left:3.90px;width:300px;text-align:center;top:545.99px;font-size:11px;color:#16191f;font-weight:normal;">10:00</div>
<div class="t" style="left:80.40px;width:300px;text-align:center;top:545.99px;font-size:11px;color:#16191f;font-weight:normal;">11:00</div>
<div class="t" style="left:156.90px;width:300px;text-align:center;top:545.99px;font-size:11px;color:#16191f;font-weight:normal;">12:00</div>
<div class="t" style="left:233.40px;width:300px;text-align:center;top:545.99px;font-size:11px;color:#16191f;font-weight:normal;">13:00</div>
<div class="t" style="left:309.90px;width:300px;text-align:center;top:545.99px;font-size:11px;color:#16191f;font-weight:normal;">14:00</div>
<div style="position:absolute;left:47.4px;top:566.3px;width:11px;height:11px;border-radius:3px;background:#1f77b4"></div>
<div class="t" style="left:62.40px;top:567.49px;font-size:11px;color:#545b64;font-weight:normal;">Memory utilization</div>
<div class="t" style="left:575.60px;top:385.66px;font-size:12.8px;color:#16191f;font-weight:normal;letter-spacing:-0.55px;">CPU Usage</div>
<div style="position:absolute;left:1081.7px;top:386.8px;width:2.6px;height:2.6px;border-radius:50%;background:#545b64"></div>
<div style="position:absolute;left:1081.7px;top:391.8px;width:2.6px;height:2.6px;border-radius:50%;background:#545b64"></div>
<div style="position:absolute;left:1081.7px;top:396.8px;width:2.6px;height:2.6px;border-radius:50%;background:#545b64"></div>
<div class="t" style="left:578.00px;top:418.99px;font-size:11px;color:#545b64;font-weight:normal;">Milliseconds</div>
<div class="t" style="left:304.30px;width:300px;text-align:right;top:441.79px;font-size:11px;color:#16191f;font-weight:normal;">80</div>
<div class="t" style="left:304.30px;width:300px;text-align:right;top:486.09px;font-size:11px;color:#16191f;font-weight:normal;">40</div>
<div class="t" style="left:304.30px;width:300px;text-align:right;top:529.09px;font-size:11px;color:#16191f;font-weight:normal;">0</div>
<svg style="position:absolute;left:0;top:0" width="1656" height="603"><line x1="607.8" y1="491.5" x2="1070" y2="491.5" stroke="#eaeded" stroke-width="1"/><line x1="607.8" y1="534.5" x2="1070" y2="534.5" stroke="#d5dbdb" stroke-width="2"/><line x1="628.4" y1="534.5" x2="628.4" y2="539.5" stroke="#eaeded" stroke-width="1"/><line x1="704.9" y1="534.5" x2="704.9" y2="539.5" stroke="#eaeded" stroke-width="1"/><line x1="781.4" y1="534.5" x2="781.4" y2="539.5" stroke="#eaeded" stroke-width="1"/><line x1="857.9" y1="534.5" x2="857.9" y2="539.5" stroke="#eaeded" stroke-width="1"/><line x1="934.4" y1="534.5" x2="934.4" y2="539.5" stroke="#eaeded" stroke-width="1"/><line x1="1010.9" y1="534.5" x2="1010.9" y2="539.5" stroke="#eaeded" stroke-width="1"/><path d="M611.97 513.00 L613.36 502.20 L614.58 480.60 L615.80 502.20 L616.32 480.60 L617.19 513.00 L618.58 480.60 L620.33 480.60 L621.54 502.20 L622.42 534.60 L624.16 513.00 L625.55 502.20 L626.77 523.80 M629.38 491.40 L630.77 502.20 L631.99 513.00 L633.21 502.20 L634.26 513.00 L635.48 502.20 L636.70 491.40 L638.09 523.80 L638.96 480.60 L644.18 480.60 L645.06 523.80 L646.80 502.20 L650.28 502.20 L651.15 523.80 L652.89 523.80 L654.63 491.40 L656.38 502.20 L658.12 513.00 L660.73 513.00 L662.47 502.20 L663.69 523.80 L665.08 513.00 L667.35 513.00 L668.57 491.40 L670.31 513.00 L672.05 502.20 L673.79 480.60 L675.01 523.80 L677.27 502.20 L679.02 491.40 L680.76 491.40 L682.50 491.40 L684.24 513.00 L685.63 469.80 L686.85 502.20 L688.59 523.80 L690.34 513.00 L692.08 502.20 L693.82 513.00 L695.56 491.40 L696.95 523.80 L699.04 491.40 L700.44 523.80 L701.66 491.40 M705.14 491.40 L707.40 491.40 L708.62 502.20 L710.02 491.40 L711.23 523.80 L712.63 491.40 L713.85 513.00 L715.07 469.80 L716.11 480.60 L718.20 513.00 L719.94 491.40 L720.00 491.40 L722.61 513.00 L724.35 502.20 L726.10 480.60 L727.84 523.80 M736.54 502.20 L737.76 523.80 L740.55 491.40 L743.51 513.00 M749.95 513.00 L751.35 502.20 L753.44 502.20 L755.70 491.40 L757.44 523.80 L759.18 480.60 L760.93 513.00 L762.67 513.00 L764.41 502.20 L765.63 513.00 L767.89 480.60 L770.51 502.20 L772.25 513.00 L776.08 523.80 L777.47 513.00 L781.30 513.00 M785.31 513.00 L786.18 523.80 L788.79 523.80 L790.53 491.40 L791.75 523.80 L794.02 502.20 L795.76 502.20 L797.50 523.80 L799.76 480.60 M802.72 502.20 L804.47 502.20 L805.68 534.60 M810.56 513.00 L811.95 513.00 L813.17 480.60 L814.91 502.20 L816.66 513.00 L817.53 502.20 L819.27 513.00 L821.01 502.20 L822.75 513.00 L824.49 502.20 L826.58 513.00 M832.33 491.40 L834.07 502.20 L835.00 480.60 L836.39 513.00 L837.61 523.80 L839.35 502.20 L841.10 523.80 L842.31 534.60 L843.71 513.00 L845.10 502.20 L846.32 491.40 L847.54 523.80 L848.93 502.20 L850.33 513.00 L851.54 491.40 L852.42 513.00 L854.16 513.00 L856.77 480.60 L858.51 513.00 L860.25 502.20 L861.99 513.00 L863.74 491.40 L865.48 513.00 L867.22 502.20 L868.44 523.80 L869.83 502.20 L870.70 523.80 L871.92 502.20 L873.31 523.80 L875.06 502.20 L876.80 502.20 L878.54 513.00 L879.93 502.20 L881.67 491.40 L883.42 513.00 L884.63 523.80 L885.85 502.20 L887.25 534.60 L888.64 502.20 L889.86 513.00 L891.08 502.20 L892.47 502.20 M895.08 491.40 L895.95 523.80 M899.44 491.40 L901.53 513.00 L902.92 502.20 M905.01 491.40 L906.40 502.20 L908.49 480.60 L910.24 523.80 L911.63 502.20 L913.37 513.00 L914.59 491.40 L916.50 523.80 L918.25 491.40 L920.34 513.00 L922.95 513.00 L923.82 502.20 M925.56 502.20 L926.95 491.40 L929.04 523.80 L930.79 491.40 L932.18 480.60 L933.92 491.40 L935.66 534.60 L938.10 491.40 L940.36 502.20 L942.11 502.20 L943.85 513.00 L945.07 491.40 L947.33 534.60 L949.07 491.40 L950.81 513.00 L952.55 513.00 M950.00 502.20 L951.74 513.00 M955.22 502.20 L956.10 523.80 L957.31 502.20 L958.71 523.80 L959.58 491.40 L961.32 513.00 L963.06 491.40 L964.28 502.20 L965.33 534.60 L966.02 513.00 L967.42 513.00 M971.25 502.20 L972.64 491.40 L974.03 523.80 L975.25 502.20 L976.47 491.40 L978.21 513.00 L979.61 523.80 L981.00 491.40 L982.22 513.00 L983.44 491.40 L984.83 502.20 L986.57 513.00 M989.18 513.00 L990.40 502.20 L992.67 502.20 L994.41 502.20 L995.63 513.00 L998.76 513.00 L1000.51 502.20 M1002.59 491.40 L1004.86 523.80 L1006.08 491.40 M1008.34 523.80 L1010.95 502.20 L1011.83 502.20 L1013.57 480.60 L1015.31 513.00 L1017.05 502.20 L1018.79 523.80 L1020.53 502.20 L1021.75 513.00 L1023.49 502.20 L1024.89 534.60 L1026.63 502.20 L1028.02 513.00 L1029.76 502.20 L1030.98 491.40 L1033.25 513.00 L1035.34 502.20 L1036.21 480.60 L1037.60 502.20 L1039.69 469.80 L1040.56 523.80 L1041.95 523.80 L1044.04 448.20 L1045.44 513.00 L1046.66 459.00 L1048.05 513.00 L1049.27 480.60 L1050.66 513.00 L1051.88 491.40 L1054.49 459.00 L1056.23 502.20 L1057.63 523.80 L1058.85 480.60 L1061.46 480.60 L1062.33 469.80 M1064.94 502.20 L1066.68 502.20 L1067.55 469.80 L1069.30 491.40 L1069.99 491.40" fill="none" stroke="#1f77b4" stroke-width="1.4" stroke-linejoin="round"/><circle cx="731.32" cy="502.20" r="1.6" fill="#1f77b4"/><circle cx="733.93" cy="513.00" r="1.6" fill="#1f77b4"/><circle cx="807.95" cy="491.40" r="1.6" fill="#1f77b4"/></svg>
<div class="t" style="left:478.40px;width:300px;text-align:center;top:545.99px;font-size:11px;color:#16191f;font-weight:normal;">09:00</div>
<div class="t" style="left:554.90px;width:300px;text-align:center;top:545.99px;font-size:11px;color:#16191f;font-weight:normal;">10:00</div>
<div class="t" style="left:631.40px;width:300px;text-align:center;top:545.99px;font-size:11px;color:#16191f;font-weight:normal;">11:00</div>
<div class="t" style="left:707.90px;width:300px;text-align:center;top:545.99px;font-size:11px;color:#16191f;font-weight:normal;">12:00</div>
<div class="t" style="left:784.40px;width:300px;text-align:center;top:545.99px;font-size:11px;color:#16191f;font-weight:normal;">13:00</div>
<div class="t" style="left:860.90px;width:300px;text-align:center;top:545.99px;font-size:11px;color:#16191f;font-weight:normal;">14:00</div>
<div style="position:absolute;left:598.4px;top:566.3px;width:11px;height:11px;border-radius:3px;background:#1f77b4"></div>
<div class="t" style="left:613.40px;top:567.49px;font-size:11px;color:#545b64;font-weight:normal;">CPU utilization</div>
<div class="t" style="left:1126.60px;top:385.66px;font-size:12.8px;color:#16191f;font-weight:normal;letter-spacing:0px;">Network Usage</div>
<div style="position:absolute;left:1632.7px;top:386.8px;width:2.6px;height:2.6px;border-radius:50%;background:#545b64"></div>
<div style="position:absolute;left:1632.7px;top:391.8px;width:2.6px;height:2.6px;border-radius:50%;background:#545b64"></div>
<div style="position:absolute;left:1632.7px;top:396.8px;width:2.6px;height:2.6px;border-radius:50%;background:#545b64"></div>
<div class="t" style="left:1129.00px;top:418.99px;font-size:11px;color:#545b64;font-weight:normal;">Bytes</div>
<div class="t" style="left:855.30px;width:300px;text-align:right;top:441.79px;font-size:11px;color:#16191f;font-weight:normal;">38.4k</div>
<div class="t" style="left:855.30px;width:300px;text-align:right;top:486.09px;font-size:11px;color:#16191f;font-weight:normal;">20.3k</div>
<div class="t" style="left:855.30px;width:300px;text-align:right;top:529.09px;font-size:11px;color:#16191f;font-weight:normal;">2.15k</div>
<svg style="position:absolute;left:0;top:0" width="1656" height="603"><line x1="1158.8" y1="491.5" x2="1621" y2="491.5" stroke="#eaeded" stroke-width="1"/><line x1="1158.8" y1="534.5" x2="1621" y2="534.5" stroke="#d5dbdb" stroke-width="2"/><line x1="1179.4" y1="534.5" x2="1179.4" y2="539.5" stroke="#eaeded" stroke-width="1"/><line x1="1255.9" y1="534.5" x2="1255.9" y2="539.5" stroke="#eaeded" stroke-width="1"/><line x1="1332.4" y1="534.5" x2="1332.4" y2="539.5" stroke="#eaeded" stroke-width="1"/><line x1="1408.9" y1="534.5" x2="1408.9" y2="539.5" stroke="#eaeded" stroke-width="1"/><line x1="1485.4" y1="534.5" x2="1485.4" y2="539.5" stroke="#eaeded" stroke-width="1"/><line x1="1561.9" y1="534.5" x2="1561.9" y2="539.5" stroke="#eaeded" stroke-width="1"/><path d="M1163.36 474.83 L1163.36 500.08 L1164.58 483.54 L1165.80 481.80 L1166.84 490.51 L1168.58 478.31 L1170.33 521.85 L1171.54 481.80 L1172.42 513.15 L1173.81 490.51 L1175.03 493.99 L1176.25 499.21 L1177.64 532.30 M1180.25 463.51 L1181.99 485.28 L1183.74 502.70 L1185.48 466.99 L1187.22 487.02 L1188.96 507.05 L1190.70 481.80 L1191.92 473.96 L1192.97 495.73 L1194.71 469.61 L1195.93 501.83 L1197.67 492.25 L1198.89 480.93 L1200.63 513.15 L1202.02 474.83 L1203.42 519.24 L1204.63 490.51 L1205.51 500.08 L1206.90 474.83 L1208.12 500.95 L1209.86 495.73 L1212.47 534.04 L1213.34 472.22 L1214.56 502.70 L1215.61 497.47 L1216.83 470.48 L1218.57 503.57 L1219.79 483.54 L1220.83 477.44 L1222.57 507.05 L1223.27 473.96 L1224.66 505.31 L1226.06 474.83 L1227.80 500.95 L1229.54 495.73 L1231.28 474.83 L1232.50 499.21 L1234.24 509.66 L1235.46 497.47 L1236.85 479.18 L1237.72 517.50 L1238.94 492.25 L1239.99 513.15 L1241.21 488.76 L1242.43 500.95 L1243.82 493.99 L1245.56 514.89 L1246.95 472.22 L1248.70 471.35 L1249.91 527.95 L1251.66 502.70 L1252.88 493.12 M1255.66 487.02 L1257.75 499.21 L1259.14 495.73 L1260.89 510.53 L1262.11 492.25 L1263.85 490.51 L1265.07 498.34 L1266.46 499.21 L1267.33 475.70 L1268.55 499.21 L1269.94 476.57 L1270.00 476.57 L1270.87 502.70 L1272.09 487.02 L1273.48 499.21 L1274.88 493.99 L1276.10 493.99 L1276.97 511.40 L1278.36 499.21 L1279.06 502.70 M1287.42 507.92 L1288.81 508.79 L1290.55 474.83 L1291.77 509.66 L1292.29 481.80 L1293.51 495.73 L1295.25 527.08 M1301.00 480.06 L1302.22 502.70 L1303.96 475.70 L1305.18 501.83 L1306.57 495.73 L1307.97 493.99 L1309.71 509.66 L1310.93 498.34 L1312.67 479.18 L1314.41 500.95 L1315.63 492.25 L1317.02 474.83 L1318.42 524.47 L1319.63 495.73 L1320.85 481.80 L1322.25 497.47 L1323.64 492.25 L1324.86 499.21 L1327.12 503.57 L1330.08 484.41 L1332.35 525.34 M1335.83 483.54 L1337.05 499.21 L1338.79 453.06 L1340.01 492.25 L1341.40 480.06 L1342.80 527.08 L1344.02 492.25 L1345.24 480.06 L1346.28 507.92 L1347.50 474.83 L1348.72 520.11 L1350.46 460.03 L1351.85 499.21 L1353.25 513.15 L1354.47 470.48 L1356.73 512.27 M1360.91 509.66 L1363.17 472.22 L1365.44 527.95 L1366.66 474.83 L1368.40 492.25 L1370.14 513.15 L1371.36 490.51 L1372.75 500.95 L1374.14 481.80 L1375.89 493.99 L1378.32 477.44 M1384.07 502.70 L1385.00 500.95 L1386.39 518.37 L1387.61 500.95 L1388.83 499.21 L1390.22 503.57 L1392.31 486.15 L1393.71 490.51 L1395.10 502.70 L1396.32 493.99 L1397.54 499.21 L1398.93 500.95 L1399.80 474.83 L1401.02 493.99 L1402.07 492.25 M1405.03 481.80 L1406.25 504.44 L1407.64 482.67 L1409.03 507.05 L1410.25 499.21 L1411.47 500.95 L1412.86 475.70 L1414.26 476.57 L1415.48 500.95 L1416.70 511.40 L1417.74 474.83 L1418.96 500.95 L1420.35 463.51 L1421.57 500.08 L1422.97 480.06 L1424.71 499.21 L1425.93 510.53 L1427.15 501.83 L1428.54 501.83 L1429.93 447.84 L1431.15 483.54 L1432.02 497.47 L1433.42 496.60 L1434.63 499.21 L1435.51 486.15 L1436.90 501.83 L1438.12 487.02 L1439.34 487.02 L1441.08 495.73 L1443.34 507.05 M1445.95 475.70 L1447.35 505.31 M1450.31 500.95 L1453.27 478.31 M1455.53 472.22 L1456.75 509.66 L1459.02 465.25 L1459.89 519.24 L1461.28 497.47 L1462.50 471.35 L1463.72 509.66 L1465.11 520.11 L1466.50 500.95 L1467.72 492.25 L1469.47 491.38 L1470.68 496.60 L1471.73 473.96 L1473.82 528.82 M1477.30 493.12 L1479.04 495.73 L1480.44 484.41 L1482.18 501.83 L1483.92 525.34 L1485.14 473.96 L1486.01 527.08 L1487.75 468.74 L1489.14 516.63 L1490.36 499.21 L1491.58 476.57 L1492.98 507.05 L1494.37 478.31 L1496.11 476.57 L1497.33 519.24 L1498.55 500.95 L1499.94 470.48 L1505.00 492.25 L1506.39 504.44 L1508.13 475.70 L1509.35 514.89 L1510.57 484.41 L1511.62 497.47 L1512.84 508.79 L1514.06 496.60 L1515.10 500.08 L1516.32 493.99 L1517.54 499.21 L1518.93 497.47 M1522.42 491.38 L1524.16 492.25 L1525.03 507.05 L1525.90 489.63 L1527.29 495.73 L1528.51 491.38 L1529.38 497.47 L1530.77 515.76 L1531.47 466.99 L1532.86 483.54 L1534.26 500.08 L1536.00 503.57 L1537.74 504.44 M1540.70 465.25 L1542.97 500.95 L1544.18 479.18 L1545.58 499.21 L1546.80 483.54 L1548.19 475.70 L1549.41 504.44 L1551.15 512.27 M1552.89 480.93 L1555.51 499.21 L1557.25 485.28 M1559.86 476.57 L1561.60 516.63 L1563.34 502.70 L1564.56 495.73 L1565.95 473.09 L1567.35 508.79 L1568.57 502.70 L1569.79 475.70 L1571.18 475.70 L1573.79 502.70 L1576.06 487.02 L1578.15 490.51 L1579.54 490.51 L1581.63 501.83 L1584.24 500.08 M1585.46 534.04 L1587.72 465.25 L1589.47 497.47 L1591.21 519.24 L1592.95 491.38 L1594.69 510.53 L1595.91 499.21 L1597.30 524.47 L1598.70 490.51 L1600.44 516.63 L1601.66 506.18 L1602.53 516.63 L1603.92 501.83 L1605.66 465.25 L1607.40 497.47 L1609.14 505.31 L1610.36 499.21 L1612.11 495.73 L1612.98 497.47 M1615.59 475.70 L1617.85 493.99 L1619.07 496.60 L1620.81 507.05 M1281.32 463.51 L1282.54 458.29" fill="none" stroke="#1f77b4" stroke-width="1.4" stroke-linejoin="round"/><circle cx="1284.80" cy="502.70" r="1.6" fill="#1f77b4"/><circle cx="1359.17" cy="467.86" r="1.6" fill="#1f77b4"/></svg>
<div class="t" style="left:1029.40px;width:300px;text-align:center;top:545.99px;font-size:11px;color:#16191f;font-weight:normal;">09:00</div>
<div class="t" style="left:1105.90px;width:300px;text-align:center;top:545.99px;font-size:11px;color:#16191f;font-weight:normal;">10:00</div>
<div class="t" style="left:1182.40px;width:300px;text-align:center;top:545.99px;font-size:11px;color:#16191f;font-weight:normal;">11:00</div>
<div class="t" style="left:1258.90px;width:300px;text-align:center;top:545.99px;font-size:11px;color:#16191f;font-weight:normal;">12:00</div>
<div class="t" style="left:1335.40px;width:300px;text-align:center;top:545.99px;font-size:11px;color:#16191f;font-weight:normal;">13:00</div>
<div class="t" style="left:1411.90px;width:300px;text-align:center;top:545.99px;font-size:11px;color:#16191f;font-weight:normal;">14:00</div>
<div style="position:absolute;left:1149.4px;top:566.3px;width:11px;height:11px;border-radius:3px;background:#1f77b4"></div>
<div class="t" style="left:1164.40px;top:567.49px;font-size:11px;color:#545b64;font-weight:normal;">Total network</div>
</body></html>
